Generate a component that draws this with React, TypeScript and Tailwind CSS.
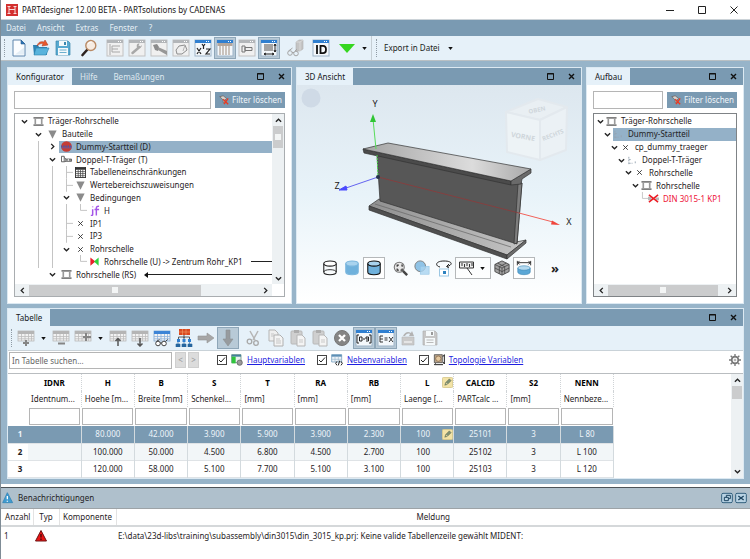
import React, { useState } from "react";
import clsx from "clsx";

/* ---------- Icons ---------- */

interface IconProps {
  children: React.ReactNode;
  size?: string;
}

const Icon: React.FC<IconProps> = ({ children, size = "size-[18px]" }) => (
  <svg viewBox="0 0 18 18" className={clsx("shrink-0", size)} fill="none" aria-hidden="true">
    {children}
  </svg>
);

// little application window used as the base of many toolbar icons
const WindowIcon: React.FC<{ blue?: boolean; children?: React.ReactNode }> = ({ blue, children }) => (
  <Icon>
    <rect x="1" y="1" width="16" height="16" fill={blue ? "#f4f8fb" : "#f0f0f0"} stroke={blue ? "#9db4c8" : "#c2c2c2"} />
    <rect x="1" y="1" width="16" height="3" fill={blue ? "#2f7fd0" : "#b3b6b9"} />
    <path d="M12 2.500h1M14 2.500h1" stroke="#fff" />
    {children}
  </Icon>
);

const GridIcon: React.FC<{ blue?: boolean; children?: React.ReactNode }> = ({ blue, children }) => (
  <Icon>
    <rect x="1" y="2" width="16" height="10" fill="#f2f2f2" stroke={blue ? "#6f9cc8" : "#b0b0b0"} strokeWidth=".7" />
    <rect x="1" y="2" width="16" height="3" fill={blue ? "#3c84d6" : "#b5b5b5"} />
    <path d="M1 7.500h16M1 9.800h16M4.500 5v7M8 5v7M11.500 5v7M14.500 5v7" stroke={blue ? "#8fb4dc" : "#bdbdbd"} strokeWidth=".8" />
    {children}
  </Icon>
);

const NewIcon = () => (
  <Icon>
    <path d="M3 1h8l4 4v12H3z" fill="#fbfdff" stroke="#5f86ad" />
    <path d="M11 1v4h4z" fill="#2c76b8" stroke="#2c5f92" strokeWidth=".6" />
    <path d="M5 15.500h9v-7z" fill="#e4eef6" />
  </Icon>
);

const OpenIcon = () => (
  <Icon>
    <path d="M1 6h5l1 2h8v8H2z" fill="#2d82b4" />
    <path d="M4 9h13l-3 7H2z" fill="#58b3dc" stroke="#2c83ad" strokeWidth=".6" />
    <path d="M5 7c1-4 4-5 7-4l1-2 3 5-6 1 1-2c-2-1-4 0-6 2z" fill="#e8582b" stroke="#a9381b" strokeWidth=".5" />
  </Icon>
);

const SaveIcon = ({ gray = false }) => (
  <Icon>
    <path d="M2 2h12l2 2v12H2z" fill={gray ? "#c6c6c6" : "#58a9d0"} stroke={gray ? "#b0b0b0" : "#3b87ae"} strokeWidth=".7" />
    <rect x="5" y="2" width="8" height="5" fill="#f4f9fb" />
    <rect x="10" y="3" width="2" height="3" fill={gray ? "#999" : "#3b87ae"} />
    <rect x="4" y="9" width="10" height="7" fill="#f4f9fb" />
    <path d="M5.500 11h7M5.500 13.500h7" stroke={gray ? "#bbb" : "#6cafce"} />
  </Icon>
);

const SearchIcon = () => (
  <Icon>
    <path d="M7 11l-4.500 5" stroke="#2d2320" strokeWidth="2.600" strokeLinecap="round" />
    <circle cx="10.800" cy="6.500" r="5" fill="#f7ece2" stroke="#b98b66" strokeWidth="1.400" />
    <path d="M8 5c1-2 3-2 4-2" stroke="#fff" />
  </Icon>
);

const GlassesIcon = () => (
  <Icon>
    <path d="M10 3l3-2h4v9l-3 2h-4z" fill="#c4c4c4" stroke="#b0b0b0" strokeWidth=".6" />
    <path d="M10 3h4v9M14 3l3-2" stroke="#e2e2e2" strokeWidth=".7" />
    <circle cx="4" cy="14" r="2.300" stroke="#a5a5a5" />
    <circle cx="10" cy="14.500" r="2.300" stroke="#a5a5a5" />
    <path d="M6 13.500h2M2.500 12l4-3M9 12l2-2" stroke="#a5a5a5" />
  </Icon>
);

const ScissorsIcon = () => (
  <Icon>
    <path d="M5 2l5 9M13 2L8 11" stroke="#b5b5b5" strokeWidth="1.500" />
    <circle cx="4.500" cy="12.500" r="2.300" stroke="#a8a8a8" strokeWidth="1.300" />
    <circle cx="11" cy="14" r="2.300" stroke="#a8a8a8" strokeWidth="1.300" />
  </Icon>
);

const CopyIcon = () => (
  <Icon>
    <path d="M2 1h6l3 3v8H2z" fill="#efefef" stroke="#b5b5b5" />
    <path d="M7 6h6l3 3v8H7z" fill="#f4f4f4" stroke="#b0b0b0" />
    <path d="M9 10h4M9 12h5M9 14h5M4 5h3M4 7h3" stroke="#c5c5c5" />
  </Icon>
);

const PasteIcon = () => (
  <Icon>
    <rect x="2" y="2" width="11" height="13" rx="1" fill="#cfcfcf" stroke="#b8b8b8" />
    <rect x="5" y="1" width="5" height="3" fill="#adadad" />
    <path d="M8 6h5l3 3v8H8z" fill="#f4f4f4" stroke="#b5b5b5" />
    <path d="M10 11h4M10 13h4" stroke="#c9c9c9" />
  </Icon>
);

const CancelIcon = () => (
  <Icon>
    <circle cx="9" cy="9" r="7.500" fill="#858585" stroke="#777" />
    <path d="M6 6l6 6M12 6l-6 6" stroke="#fff" strokeWidth="2.300" />
  </Icon>
);

const RestoreIcon = () => (
  <Icon>
    <path d="M3 8h12v8H3z" fill="#cacaca" stroke="#b5b5b5" strokeWidth=".6" />
    <path d="M4 7c2-4 5-5 8-3l1-2 2 5-5 0 1-2c-2-1-4 0-5 2z" fill="#b3b3b3" />
    <path d="M5 13h8" stroke="#eee" strokeWidth="1.500" />
  </Icon>
);

const OrgIcon = () => (
  <Icon>
    <rect x="4" y="0" width="11" height="6" fill="#d9481e" />
    <path d="M4 3h11M7.500 0v6M11 0v6" stroke="#f1a06a" strokeWidth=".6" />
    <path d="M9 6v3M3.500 10V8h11v2M9 8v2" stroke="#3a3a3a" strokeWidth=".8" />
    <path d="M2 10h3v3H2zM7.500 10h3v3h-3zM13 10h3v3h-3z" fill="#2f7fd0" />
    <path d="M1 15h4v3H1zM7 15h4v3H7zM13 15h4v3h-4zM3 13v2M9 13v2M14.500 13v2" fill="#26669e" stroke="#26669e" strokeWidth=".6" />
  </Icon>
);

const FilterClearIcon = () => (
  <svg viewBox="0 0 12 12" className="size-[10px] shrink-0" fill="none" aria-hidden="true">
    <path d="M1 2l4-1 4 3-2 2v4l-2-1V6z" fill="#d9d2cc" stroke="#5c4a44" strokeWidth=".7" />
    <path d="M5 5l6 6M11 4l-5 7" stroke="#ea3a22" strokeWidth="1.600" />
  </svg>
);

const AppLogo = () => (
  <svg viewBox="0 0 12 12" className="size-3" fill="none" aria-hidden="true">
    <rect width="12" height="12" fill="#d3302f" />
    <path d="M3 3v6M9 3v6M1.500 2.500h3M7.500 2.500h3M1.500 9.500h3M7.500 9.500h3M3 5.500h6" stroke="#f8dcdc" />
  </svg>
);

const PencilIcon = () => (
  <svg viewBox="0 0 12 12" className="size-[11px] shrink-0" fill="none" aria-hidden="true">
    <rect x=".5" y=".5" width="11" height="11" rx="1" fill="#f3e3a6" stroke="#d8c98e" />
    <path d="M3 9l1-3 4-4 2 2-4 4z" fill="#7f9072" stroke="#5f6b52" strokeWidth=".5" />
    <path d="M4.500 6.500l1.500 1.500" stroke="#f3e3a6" />
  </svg>
);

const Caret = () => (
  <svg viewBox="0 0 6 4" className="h-[3px] w-[5px] shrink-0" aria-hidden="true">
    <path d="M0 0h6L3 4z" fill="#111" />
  </svg>
);

type Direction = "up" | "down" | "left" | "right";

const chevronPaths: Record<Direction, string> = {
  up: "M1 5.500l3-3 3 3",
  down: "M1 2.500l3 3 3-3",
  left: "M5.500 1l-3 3 3 3",
  right: "M2.500 1l3 3-3 3"
};

const Chevron: React.FC<{ dir: Direction }> = ({ dir }) => (
  <svg viewBox="0 0 8 8" className="size-[7px] shrink-0" fill="none" aria-hidden="true">
    <path d={chevronPaths[dir]} stroke="#222" strokeWidth="1.500" />
  </svg>
);

/* ---------- Tree ---------- */

type TreeIconName = "module" | "filter" | "dummy" | "beam" | "table" | "if" | "point" | "link" | "faint" | "error";

const TreeIcon: React.FC<{ name: TreeIconName }> = ({ name }) => (
  <svg viewBox="0 0 12 12" className="size-[11px] shrink-0" fill="none" aria-hidden="true">
    {name === "module" && (
      <>
        <path d="M.5 2h11M.5 10h11" stroke="#808080" strokeWidth="1.800" />
        <path d="M2.500 3v6M9.500 3v6" stroke="#9a9a9a" strokeWidth="1.800" />
      </>
    )}
    {name === "filter" && <path d="M1.500 1.500h9L6 10.500z" fill="#8b8b8b" />}
    {name === "dummy" && (
      <>
        <circle cx="6" cy="6" r="5.800" fill="#c63c34" />
        <path d="M.5 5v2M3 5v2M5.500 5v2M8 5v2M10.500 5v2" stroke="#4a55a8" strokeWidth="1.600" />
        <path d="M0 7.500h12" stroke="#5b5fae" strokeWidth=".8" />
      </>
    )}
    {name === "beam" && (
      <>
        <path d="M.5 2.500h3v6h-3z" fill="#fff" stroke="#555" />
        <path d="M3.500 4l2 1.500h6v2.500h-6l-2 .5" fill="#999" stroke="#444" strokeWidth=".8" />
        <path d="M8 5.500v2" stroke="#fff" />
      </>
    )}
    {name === "faint" && <path d="M2 2v8M2 9h4M2 5h2M9 7v2h1" stroke="#95a3b0" strokeWidth="1" strokeDasharray="2 1" />}
    {name === "table" && (
      <>
        <rect x=".5" y=".5" width="11" height="11" fill="#fff" stroke="#333" />
        <path d="M0 2h12" stroke="#333" strokeWidth="2" />
        <path d="M1 5h10M1 7.200h10M1 9.500h10M3.500 3v8M6 3v8M8.500 3v8" stroke="#444" strokeWidth=".8" />
      </>
    )}
    {name === "if" && (
      <path d="M4 4.500v6q0 1-2 1M4 1.500v1M11 1.500q-3-.5-3 2v8M6 5h5" stroke="#a455e8" strokeWidth="1.600" />
    )}
    {name === "point" && <path d="M3.500 3.500l5 5M8.500 3.500l-5 5" stroke="#333" strokeWidth="1" />}
    {name === "link" && (
      <>
        <path d="M1.500 1.500L7 6l-5.500 4.500z" fill="#e8202a" />
        <path d="M10.500 1.500L5.500 6l5 4.500z" fill="#2fd33c" />
      </>
    )}
    {name === "error" && (
      <>
        <path d="M0 4h4v4H0M8 5h4v3H8" fill="#b9b9b9" />
        <path d="M1 2l10 8M11 2L1 10" stroke="#ec1c24" strokeWidth="1.700" />
      </>
    )}
  </svg>
);

type Branch = "open" | "closed" | "tee" | "elbow";

interface TreeNode {
  label: string;
  icon: TreeIconName;
  // one character per ancestor level: "|" draws a guide line
  guides: string;
  branch: Branch;
  selected?: boolean;
  error?: boolean;
  arrow?: "out" | "in";
}

const configNodes: TreeNode[] = [
  { label: "Träger-Rohrschelle", icon: "module", guides: "", branch: "open" },
  { label: "Bauteile", icon: "filter", guides: " ", branch: "open" },
  { label: "Dummy-Startteil (D)", icon: "dummy", guides: " |", branch: "closed", selected: true },
  { label: "Doppel-T-Träger (T)", icon: "beam", guides: " |", branch: "open" },
  { label: "Tabelleneinschränkungen", icon: "table", guides: " ||", branch: "tee" },
  { label: "Wertebereichszuweisungen", icon: "filter", guides: " ||", branch: "tee" },
  { label: "Bedingungen", icon: "filter", guides: " ||", branch: "open" },
  { label: "H", icon: "if", guides: " |||", branch: "elbow" },
  { label: "IP1", icon: "point", guides: " ||", branch: "tee" },
  { label: "IP3", icon: "point", guides: " ||", branch: "tee" },
  { label: "Rohrschelle", icon: "point", guides: " ||", branch: "open" },
  { label: "Rohrschelle (U) -> Zentrum Rohr_KP1", icon: "link", guides: " || ", branch: "elbow", arrow: "out" },
  { label: "Rohrschelle (RS)", icon: "module", guides: "  ", branch: "open", arrow: "in" }
];

const structureNodes: TreeNode[] = [
  { label: "Träger-Rohrschelle", icon: "module", guides: "", branch: "open" },
  { label: "Dummy-Startteil", icon: "faint", guides: " ", branch: "open", selected: true },
  { label: "cp_dummy_traeger", icon: "point", guides: "  ", branch: "open" },
  { label: "Doppel-T-Träger", icon: "faint", guides: "   ", branch: "open" },
  { label: "Rohrschelle", icon: "point", guides: "    ", branch: "open" },
  { label: "Rohrschelle", icon: "module", guides: "     ", branch: "open" },
  { label: "DIN 3015-1 KP1", icon: "error", guides: "      ", branch: "elbow", error: true }
];

const BranchCell: React.FC<{ branch: Branch; compact?: boolean }> = ({ branch, compact }) => (
  <span className={clsx("flex shrink-0 items-center justify-center self-stretch", compact ? "w-3" : "w-3.5")}>
    {branch === "open" && <Chevron dir="down" />}
    {branch === "closed" && <Chevron dir="right" />}
    {branch === "tee" && (
      <svg viewBox="0 0 14 13" className="h-full w-full" preserveAspectRatio="none" aria-hidden="true">
        <path d="M7.500 0v13M7 6.500h7" stroke="#c4c4c4" fill="none" />
      </svg>
    )}
    {branch === "elbow" && (
      <svg viewBox="0 0 14 13" className="h-full w-full" preserveAspectRatio="none" aria-hidden="true">
        <path d="M7.500 0v6.500h6.500" stroke="#c4c4c4" fill="none" />
      </svg>
    )}
  </span>
);

const Tree: React.FC<{ nodes: TreeNode[]; label: string; compact?: boolean }> = ({ nodes, label, compact }) => (
  <ul
    role="tree"
    aria-label={label}
    className={clsx("flex min-w-0 flex-col", compact ? "h-[90px]" : "h-[166px] pl-0.5")}
  >
    {nodes.map((node, i) => (
      <li key={i} role="treeitem" aria-selected={!!node.selected} className="flex min-h-0 flex-1 items-center">
        {node.guides.split("").map((g, level) => (
          <span key={level} className={clsx("flex shrink-0 justify-center self-stretch", compact ? "w-[7px]" : "w-3.5")}>
            {g === "|" && <span className="w-px bg-[#c4c4c4]" />}
          </span>
        ))}
        <BranchCell branch={node.branch} compact={compact} />
        <span
          className={clsx(
            "flex min-w-0 flex-1 items-center gap-1 self-stretch whitespace-nowrap",
            !compact && "pl-0.5",
            node.selected && "bg-[#94b1c8]",
            node.error && "text-[#ee1438]"
          )}
        >
          <TreeIcon name={node.icon} />
          {node.label}
          {node.arrow && (
            <span className="ml-1 flex min-w-0 flex-1 items-center">
              {node.arrow === "in" && (
                <svg viewBox="0 0 4 6" className="h-1.5 w-1 shrink-0" aria-hidden="true">
                  <path d="M4 0v6L0 3z" fill="#111" />
                </svg>
              )}
              <span className="h-px flex-1 bg-[#222]" />
            </span>
          )}
        </span>
      </li>
    ))}
  </ul>
);

/* ---------- Scrollbars ---------- */

const HScroll: React.FC<{ thumb: string; right: string }> = ({ thumb, right }) => (
  <div className="flex h-3 items-center bg-[#edf1f3]">
    <span className="flex w-3.5 justify-center"><Chevron dir="left" /></span>
    <span className={clsx("flex h-[11px] items-center justify-center bg-[#cbcccd]", thumb)}>
      <span className="size-1.5 bg-[#f3f5f5]" />
    </span>
    <span className={right} />
    <span className="flex w-3.5 justify-center"><Chevron dir="right" /></span>
  </div>
);

const VScroll: React.FC<{ thumb: string; grip?: boolean }> = ({ thumb, grip }) => (
  <div className="flex w-3 shrink-0 flex-col items-center bg-[#edf1f3]">
    <span className="flex h-3 items-center"><Chevron dir="up" /></span>
    <span className={clsx("flex w-[10px] items-center justify-center bg-[#cbcccd]", thumb)}>
      {grip && <span className="size-1.5 bg-[#f3f5f5]" />}
    </span>
    <span className="flex-1" />
    <span className="flex h-3 items-center"><Chevron dir="down" /></span>
  </div>
);

/* ---------- Panels ---------- */

interface PanelProps {
  tabs: string[];
  children: React.ReactNode;
}

const Panel: React.FC<PanelProps> = ({ tabs, children }) => {
  const [active, setActive] = useState(tabs[0]);

  return (
    <section className="flex min-w-0 flex-col border border-[#dce9f2] bg-white">
      <header className="flex h-[17px] items-stretch bg-[#7a9ab2]">
        <div role="tablist" className="flex">
          {tabs.map(tab => (
            <button
              key={tab}
              role="tab"
              aria-selected={active === tab}
              onClick={() => setActive(tab)}
              className={clsx("px-2", active === tab ? "bg-[#e6f1f9] text-[#15181b]" : "text-[#dfe9f0]")}
            >
              {tab}
            </button>
          ))}
        </div>
        <div className="ml-auto flex items-center gap-3.5 pr-1.5">
          <button aria-label="Maximieren">
            <svg viewBox="0 0 7 7" className="size-[7px]" fill="none">
              <path d="M.5 .5h6v6h-6zM0 1h7" stroke="#111" />
            </svg>
          </button>
          <button aria-label="Schließen">
            <svg viewBox="0 0 7 7" className="size-[7px]" fill="none">
              <path d="M1 1l5 5M6 1L1 6" stroke="#111" strokeWidth="1.400" />
            </svg>
          </button>
        </div>
      </header>
      {children}
    </section>
  );
};

const FilterBar: React.FC<{ label: string }> = ({ label }) => (
  <div className="flex items-center gap-1">
    <input aria-label={label} className="h-[18px] min-w-0 flex-1 border border-[#b5b5b5] bg-white px-1 outline-none" />
    <button className="flex h-4 w-[70px] items-center gap-[3px] bg-[#7a9ab2] pl-1 whitespace-nowrap text-[#f1f6fa]">
      <FilterClearIcon />
      Filter löschen
    </button>
  </div>
);

/* ---------- Toolbars ---------- */

interface ToolProps {
  label: string;
  pressed?: boolean;
  children: React.ReactNode;
}

const Tool: React.FC<ToolProps> = ({ label, pressed, children }) => (
  <button
    aria-label={label}
    className={clsx(
      "flex h-[22px] w-[22px] shrink-0 items-center justify-center",
      pressed && "border border-[#8ea6b8] bg-[#b8cad7]"
    )}
  >
    {children}
  </button>
);

const Handle = () => <span className="mr-[3px] h-[18px] w-px shrink-0 border-l border-dotted border-[#8f9ba5]" />;

const MainToolbar = () => (
  <div className="flex h-[25px] items-center border-b border-[#b9c0c4] bg-[#e6f1f9] pl-[3px]">
    <Handle />
    <Tool label="Neu"><NewIcon /></Tool>
    <Tool label="Öffnen"><OpenIcon /></Tool>
    <Tool label="Speichern"><SaveIcon /></Tool>
    <span className="w-1" />
    <Tool label="Suchen"><SearchIcon /></Tool>
    <span className="w-1" />
    <Tool label="Konfigurator">
      <WindowIcon>
        <path d="M4 5v11M6 7h8M6 10h6M6 13h8M6 7v6" stroke="#a8a8a8" />
      </WindowIcon>
    </Tool>
    <Tool label="Werkzeuge">
      <WindowIcon>
        <path d="M4.500 14l7-6" stroke="#a8a8a8" strokeWidth="2.500" strokeLinecap="round" />
        <path d="M14 6l-2 2-1.500-1 1-2.500c-3 0-3 2-2.500 4 2 1.500 5 0 5-2.500z" fill="#a8a8a8" />
      </WindowIcon>
    </Tool>
    <Tool label="Schraube">
      <WindowIcon>
        <path d="M3 6l4-1 2 3-1 4-3-1z" fill="#8b8b8b" />
        <path d="M8 8l9 4v4l-9-5z" fill="#979797" />
      </WindowIcon>
    </Tool>
    <Tool label="Geometrie">
      <WindowIcon>
        <path d="M4 11l3-4 6-1 2 5-5 4-5 0z" fill="#eee" stroke="#8d8d8d" />
        <path d="M13 6l-2 6" stroke="#b5b5b5" />
      </WindowIcon>
    </Tool>
    <Tool label="XYZ">
      <WindowIcon blue>
        <path d="M3 9l4 6M7 9l-4 6M8 5l1.500 2L11 5M9.500 7v3M12 10h4l-4 5h4" stroke="#222" strokeWidth="1.200" />
      </WindowIcon>
    </Tool>
    <Tool label="Tabelle" pressed>
      <WindowIcon blue>
        <path d="M1.500 4h15v3h-15z" fill="#b5a79c" />
        <path d="M4 5v11M7 5v11M10 5v11M13 5v11" stroke="#b3a69b" strokeWidth="1.300" />
      </WindowIcon>
    </Tool>
    <Tool label="Bauteil">
      <WindowIcon>
        <path d="M4 7h3v6H4zM7 8.500h7v3H7z" stroke="#777" />
      </WindowIcon>
    </Tool>
    <Tool label="Maße" pressed>
      <WindowIcon blue>
        <rect x="4" y="5" width="9" height="7" fill="#a3a3a3" />
        <path d="M15 5v8M4 15h10M14 7l1-2 1 2M14 11l1 2 1-2M6 14l-2 1 2 1M12 14l2 1-2 1" stroke="#222" />
      </WindowIcon>
    </Tool>
    <span className="w-1" />
    <Tool label="Vorschau"><GlassesIcon /></Tool>
    <span className="w-1" />
    <Tool label="ID">
      <WindowIcon blue>
        <path d="M5 6v9M8.500 6.800h2.500q3 0 3 3.700t-3 3.700H8.500z" stroke="#111" strokeWidth="1.800" />
      </WindowIcon>
    </Tool>
    <span className="w-1" />
    <Tool label="Ausführen">
      <Icon>
        <path d="M1 5h16l-8 9z" fill="#35d61f" />
      </Icon>
    </Tool>
    <button aria-label="Weitere Aktionen" className="flex w-[13px] justify-center"><Caret /></button>
    <span className="mr-1 h-6 w-px bg-[#c5ced4]" />
    <Handle />
    <button className="ml-1 flex items-center gap-2 whitespace-nowrap text-[#1b1e21]">
      Export in Datei
      <Caret />
    </button>
  </div>
);

const TableToolbar = () => (
  <div className="flex h-[25px] items-center border-b border-[#c9d2d8] bg-[#e6f1f9] pl-[3px]">
    <Handle />
    <Tool label="Zeile einfügen"><GridIcon><path d="M9 11v6M6 14h6" stroke="#858585" strokeWidth="2" /></GridIcon></Tool>
    <button aria-label="Einfügeoptionen" className="flex w-[13px] justify-center"><Caret /></button>
    <Tool label="Zeile löschen"><GridIcon><path d="M6 14.500h7" stroke="#858585" strokeWidth="2" /></GridIcon></Tool>
    <Tool label="Spalte einfügen"><GridIcon><path d="M12 4v8M9 8h8" stroke="#858585" strokeWidth="2" /></GridIcon></Tool>
    <button aria-label="Spaltenoptionen" className="flex w-[13px] justify-center"><Caret /></button>
    <Tool label="Nach oben"><GridIcon><path d="M9 17v-7M6.500 12L9 9.500l2.500 2.500" stroke="#555" strokeWidth="1.500" /></GridIcon></Tool>
    <Tool label="Nach unten"><GridIcon><path d="M9 9v7M6.500 14.500L9 17l2.500-2.500" stroke="#555" strokeWidth="1.500" /></GridIcon></Tool>
    <Tool label="Tabelle prüfen">
      <GridIcon blue>
        <circle cx="5" cy="14.500" r="2.300" fill="#fff" stroke="#444" />
        <circle cx="11" cy="14.500" r="2.300" fill="#fff" stroke="#444" />
        <path d="M7 14h2M3.500 12.500l3-2M12.500 12.500l2-2" stroke="#444" />
      </GridIcon>
    </Tool>
    <Tool label="Struktur"><OrgIcon /></Tool>
    <Tool label="Weiter">
      <Icon><path d="M1 7h9V4l7 5-7 5v-3H1z" fill="#a6a6a6" stroke="#969696" strokeWidth=".6" /></Icon>
    </Tool>
    <Tool label="Übernehmen" pressed>
      <Icon><path d="M7 1h4v9h3l-5 7-5-7h3z" fill="#979b9e" stroke="#8c9093" strokeWidth=".6" /></Icon>
    </Tool>
    <span className="w-1" />
    <Tool label="Ausschneiden"><ScissorsIcon /></Tool>
    <Tool label="Kopieren"><CopyIcon /></Tool>
    <Tool label="Einfügen"><PasteIcon /></Tool>
    <Tool label="Inhalte einfügen"><PasteIcon /></Tool>
    <Tool label="Abbrechen"><CancelIcon /></Tool>
    <Tool label="Wertebereich" pressed>
      <WindowIcon blue>
        <path d="M4 6H2v8h2M14 6h2v8h-2M4.500 8h2.500v4H4.500zM8 10h2M11 12h2.500V8H11v2h2" stroke="#222" />
      </WindowIcon>
    </Tool>
    <Tool label="Ausdruck" pressed>
      <WindowIcon blue>
        <path d="M6 7H3v6h3M3 10h3M7.500 9h3M7.500 11h3M12 8l4 5M16 8l-4 5" stroke="#333" />
      </WindowIcon>
    </Tool>
    <Tool label="Wiederherstellen"><RestoreIcon /></Tool>
    <Tool label="Tabelle speichern"><SaveIcon gray /></Tool>
  </div>
);

/* ---------- 3D view ---------- */

const Scene = () => (
  <svg viewBox="0 0 284 218" className="h-[218px] w-full" fill="none" role="img" aria-label="Doppel-T-Träger">
    <defs>
      <linearGradient id="topFace" x1="0" y1="0" x2="1" y2="0">
        <stop offset="0" stopColor="#a4a4a4" />
        <stop offset=".65" stopColor="#dcdcdc" />
        <stop offset="1" stopColor="#a8a8a8" />
      </linearGradient>
      <linearGradient id="bottomFace" x1="0" y1="0" x2="1" y2="0">
        <stop offset="0" stopColor="#8f8f8f" />
        <stop offset="1" stopColor="#c5c5c5" />
      </linearGradient>
    </defs>

    <circle cx="14" cy="13" r="9.500" fill="#cfdae6" />

    {/* Ansichtswürfel */}
    <g stroke="#e3e9ee" strokeWidth="2" strokeLinejoin="round">
      <path d="M209 27l32-13 29 8-27 13z" fill="#e9eff3" />
      <path d="M209 27l34 8v40l-33-8z" fill="#edf3f6" />
      <path d="M243 35l27-13-1 43-26 10z" fill="#ebf1f5" />
    </g>
    <g fill="#cfd6db" fontSize="7" fontWeight="bold" textAnchor="middle">
      <text x="226" y="54" transform="rotate(10 226 52)">VORNE</text>
      <text x="256" y="52" fontSize="6" transform="rotate(-22 256 50)">RECHTS</text>
      <text x="240" y="27" fontSize="6" transform="rotate(-12 240 25)">OBEN</text>
    </g>

    {/* Träger */}
    <g stroke="#333" strokeWidth=".7" strokeLinejoin="round">
      <path d="M72 121l10-7 137 43 10-2-19 15z" fill="url(#bottomFace)" />
      <path d="M72 121l138 49v4L72 125z" fill="#505050" />
      <path d="M210 170l19-15v3l-19 16z" fill="#6d6d6d" />
      <path d="M80 70l145 28-5 61-137-43z" fill="#575757" />
      <path d="M221 99l4-1-5 60-3 1z" fill="#7e7e7e" />
      <path d="M78 119l136 43" stroke="#666" />
      <path d="M66 64l148 32v4L67 68z" fill="#4b4b4b" />
      <path d="M214 96l20-12v4l-9 6-1 5-10 1z" fill="#6a6a6a" />
      <path d="M66 64l25-6 143 26-20 12z" fill="url(#topFace)" />
    </g>

    <path d="M79 64l-3-30" stroke="#58dc5a" />
    <path d="M76 29l-3 8h6z" fill="#2fc534" />
    <path d="M80 70l1 22" stroke="#4fd84f" strokeDasharray="2 1" />
    <path d="M81 92l-32 11" stroke="#6464f0" />
    <path d="M42 105l7-4 1 4z" fill="#4b4bff" stroke="#4b4bff" />
    <path d="M81 92l141 36" stroke="#8f3a3a" strokeWidth=".8" />
    <path d="M222 128l34 9" stroke="#f2625a" />
    <path d="M263 140l-8-4.500-1 4z" fill="#f0463c" />
    <circle cx="81" cy="92" r="2" fill="#26324a" />

    <g fill="#222" fontSize="9" textAnchor="middle">
      <text x="78" y="22">Y</text>
      <text x="40" y="104">Z</text>
      <text x="272" y="140">X</text>
    </g>
  </svg>
);

const Cylinder: React.FC<{ fill: string; stroke: string }> = ({ fill, stroke }) => (
  <Icon size="size-4">
    <path d="M2 4v9.500c0 4 14 4 14 0V4" fill={fill} stroke={stroke} strokeWidth="1.200" />
    <ellipse cx="9" cy="4" rx="7" ry="2.900" fill={fill === "none" ? "#fff" : "#a9d3ee"} stroke={stroke} strokeWidth="1.200" />
    {fill === "none" && <path d="M2 13.500c0-3.500 14-3.500 14 0" stroke={stroke} />}
  </Icon>
);

const ViewTool: React.FC<ToolProps> = ({ label, pressed, children }) => (
  <button
    aria-label={label}
    className={clsx("flex size-[22px] shrink-0 items-center justify-center", pressed && "border border-[#b5b8ba] bg-white")}
  >
    {children}
  </button>
);

const ViewToolbar = () => (
  <div className="absolute bottom-6 left-[22px] flex items-center">
    <ViewTool label="Drahtmodell"><Cylinder fill="none" stroke="#222" /></ViewTool>
    <ViewTool label="Schattiert"><Cylinder fill="#6fb1dc" stroke="#7ab6dd" /></ViewTool>
    <ViewTool label="Schattiert mit Kanten" pressed><Cylinder fill="#6fb1dc" stroke="#111" /></ViewTool>
    <span className="w-1" />
    <ViewTool label="Zoom">
      <Icon size="size-[15px]">
        <path d="M11 11l6 6" stroke="#444" strokeWidth="3" />
        <circle cx="7.500" cy="7.500" r="6" fill="#e8e8e8" stroke="#777" strokeWidth="1.300" />
        <path d="M5 7V5h2M10 5h1v2M11 9v2h-2M7 11H5V9" stroke="#333" strokeWidth="1.400" />
      </Icon>
    </ViewTool>
    <ViewTool label="Transparenz">
      <Icon size="size-4">
        <circle cx="7" cy="7" r="6" fill="#8fc3e6" stroke="#777" />
        <rect x="7" y="7" width="10" height="9" fill="#a8d3f0" fillOpacity=".8" stroke="#8bbfe2" strokeWidth=".6" />
      </Icon>
    </ViewTool>
    <ViewTool label="Drehen">
      <Icon>
        <path d="M5 8C0 7 0 2 9 2s9 4 3 5.500M14 5l-2.500 2.500L14 9" stroke="#222" />
        <rect x="4.500" y="10" width="9" height="7" fill="#fff" stroke="#9cc7e3" />
        <rect x="8" y="12" width="3" height="3" fill="#2d82c0" />
      </Icon>
    </ViewTool>
    <button aria-label="Messen" className="flex h-[22px] w-9 items-center gap-1 border border-[#b5b8ba] bg-white/60 px-0.5">
      <Icon>
        <path d="M1.500 3h14v6h-14z" fill="#eee" stroke="#333" />
        <path d="M4 4v3M6.500 5v3M9 4v3M11.500 5v3M14 4v3M9 9l5 7" stroke="#333" />
      </Icon>
      <Caret />
    </button>
    <ViewTool label="Netz">
      <Icon size="size-4">
        <path d="M9 1l8 4v8l-8 4-8-4V5z" fill="#a2a2a2" stroke="#444" />
        <path d="M9 9v8M1 5l8 4 8-4M4 3.500l8 4v8M14 3.500l-8 4v8M1 9l8 4 8-4" stroke="#3d3d3d" strokeWidth=".8" />
      </Icon>
    </ViewTool>
    <ViewTool label="Bemaßung" pressed>
      <Icon size="size-4">
        <path d="M2 3h14M4 1L2 3l2 2M14 1l2 2-2 2M1.500 1v5M16.500 1v5" stroke="#222" />
        <path d="M2 9v4.500c0 4 14 4 14 0V9" fill="#5ba7d6" stroke="#3e88b5" strokeWidth=".7" />
        <ellipse cx="9" cy="9" rx="7" ry="2.500" fill="#b5daf0" stroke="#3e88b5" strokeWidth=".7" />
      </Icon>
    </ViewTool>
    <button aria-label="Mehr" className="ml-4 text-[13px] leading-4 font-bold text-[#222]">»</button>
  </div>
);

/* ---------- Variable table ---------- */

interface Column {
  name: string;
  desc: string;
  editable?: boolean;
}

const columns: Column[] = [
  { name: "IDNR", desc: "Identnum..." },
  { name: "H", desc: "Hoehe [m..." },
  { name: "B", desc: "Breite [mm]" },
  { name: "S", desc: "Schenkel..." },
  { name: "T", desc: "[mm]" },
  { name: "RA", desc: "[mm]" },
  { name: "RB", desc: "[mm]" },
  { name: "L", desc: "Laenge [...", editable: true },
  { name: "CALCID", desc: "PARTcalc ..." },
  { name: "S2", desc: "[mm]" },
  { name: "NENN", desc: "Nennbeze..." }
];

const rows: string[][] = [
  ["", "80.000", "42.000", "3.900", "5.900", "3.900", "2.300", "100", "25101", "3", "L 80"],
  ["", "100.000", "50.000", "4.500", "6.800", "4.500", "2.700", "100", "25102", "3", "L 100"],
  ["", "120.000", "58.000", "5.100", "7.700", "5.100", "3.100", "100", "25103", "3", "L 120"]
];

const VariableTable = () => {
  const [selected, setSelected] = useState(0);

  return (
    <table className="w-[606px] shrink-0 table-fixed border-collapse">
      <colgroup>
        <col className="w-5" />
        {columns.map(c => <col key={c.name} />)}
      </colgroup>
      <thead>
        <tr className="h-[17px]">
          <td />
          {columns.map(c => (
            <th key={c.name} scope="col" className="border-r border-dotted border-[#cfd3d6] p-0 font-bold text-black">
              <span className="grid grid-cols-[11px_1fr_11px] items-center">
                <span />
                {c.name}
                {c.editable && <PencilIcon />}
              </span>
            </th>
          ))}
        </tr>
        <tr className="h-4">
          <td />
          {columns.map(c => (
            <td key={c.name} className="border-r border-dotted border-[#cfd3d6] p-0 pl-[3px] whitespace-nowrap">
              {c.desc}
            </td>
          ))}
        </tr>
        <tr className="h-[19px]">
          <td />
          {columns.map(c => (
            <td key={c.name} className="p-0 px-px">
              <input
                aria-label={`Filter ${c.name}`}
                className="block h-[17px] w-full border border-[#b5b5b5] bg-white px-1 outline-none"
              />
            </td>
          ))}
        </tr>
      </thead>
      <tbody>
        {rows.map((row, r) => (
          <tr
            key={r}
            onClick={() => setSelected(r)}
            className={clsx(
              "h-[17px] border-b border-[#dfe3e6] text-center",
              r === selected && "bg-[#7a9ab2] text-[#edf4f9]",
              r !== selected && r === 1 && "bg-[#f2f6f8]"
            )}
          >
            <th scope="row" className={clsx("p-0 pl-1 font-bold", r !== selected && "bg-white")}>{r + 1}</th>
            {row.map((value, c) => (
              <td key={c} className="border-r border-[#d3dade] p-0">
                {columns[c].editable ? (
                  <span className="grid grid-cols-[11px_1fr_11px] items-center">
                    <span />
                    <span className="pr-2">{value}</span>
                    {r === selected && <PencilIcon />}
                  </span>
                ) : (
                  value
                )}
              </td>
            ))}
          </tr>
        ))}
      </tbody>
    </table>
  );
};

const VariableToggle: React.FC<{ label: string; children: React.ReactNode }> = ({ label, children }) => {
  const [checked, setChecked] = useState(true);

  return (
    <div className="flex items-center gap-1 whitespace-nowrap">
      <span className="grid size-[10px]">
        <input
          type="checkbox"
          aria-label={label}
          checked={checked}
          onChange={e => setChecked(e.target.checked)}
          className="col-start-1 row-start-1 size-[10px] appearance-none border border-[#444] bg-white"
        />
        {checked && (
          <svg viewBox="0 0 10 10" className="pointer-events-none col-start-1 row-start-1 size-[10px]" fill="none">
            <path d="M2 5l2 2 4-4.500" stroke="#222" />
          </svg>
        )}
      </span>
      <Icon size="size-3">{children}</Icon>
      <a href="#" className="text-[#1f1fe0] underline">{label}</a>
    </div>
  );
};

/* ---------- App ---------- */

const App: React.FC = () => {
  return (
    <div className="flex min-h-screen flex-col border-l border-[#7f8c96] bg-white font-['Noto_Sans','Open_Sans',sans-serif] text-[8px] leading-3 text-[#1f2224]">

      {/* Titelleiste */}
      <div className="flex h-5 items-center gap-1 border-b border-[#ccd3d8] pl-[5px]">
        <AppLogo />
        <h1 className="whitespace-nowrap text-[#161616]">PARTdesigner 12.00 BETA - PARTsolutions by CADENAS</h1>
        <div className="ml-auto flex items-center gap-6 pr-3">
          <button aria-label="Minimieren">
            <svg viewBox="0 0 8 8" className="size-2"><path d="M0 4.500h8" stroke="#222" /></svg>
          </button>
          <button aria-label="Maximieren">
            <svg viewBox="0 0 8 8" className="size-2" fill="none"><path d="M.5 .5h7v7h-7z" stroke="#222" /></svg>
          </button>
          <button aria-label="Schließen">
            <svg viewBox="0 0 8 8" className="size-2"><path d="M.5 .5l7 7M7.500 .5l-7 7" stroke="#222" /></svg>
          </button>
        </div>
      </div>

      {/* Menü */}
      <nav className="flex h-4 items-center gap-[11px] bg-[#7a9ab2] pl-[5px] text-[#e6eff5]">
        <button>Datei</button>
        <button>Ansicht</button>
        <button>Extras</button>
        <button>Fenster</button>
        <button>?</button>
      </nav>

      <MainToolbar />

      <main className="flex flex-col gap-1 bg-[#97b4c9] px-1.5 pt-1.5 pb-[5px]">

        <div className="grid grid-cols-[285fr_286fr_158fr] gap-1">

          <Panel tabs={["Konfigurator", "Hilfe", "Bemaßungen"]}>
            <div className="flex flex-col gap-1 px-1.5 py-1.5">
              <FilterBar label="Konfigurator filtern" />
              <div className="flex h-[184px] flex-col border border-[#a9adb0]">
                <div className="flex min-h-0 flex-1">
                  <div className="min-w-0 flex-1 overflow-hidden pt-px">
                    <Tree nodes={configNodes} label="Konfigurator" />
                  </div>
                  <VScroll thumb="h-[22px]" grip />
                </div>
                <div className="pr-3">
                  <HScroll thumb="flex-[3]" right="flex-1" />
                </div>
              </div>
            </div>
          </Panel>

          <Panel tabs={["3D Ansicht"]}>
            <div className="relative bg-linear-to-b from-[#dde7ef] via-[#e8f3f9] to-white">
              <Scene />
              <ViewToolbar />
            </div>
          </Panel>

          <Panel tabs={["Aufbau"]}>
            <div className="flex flex-col gap-1 px-1.5 py-1.5">
              <FilterBar label="Aufbau filtern" />
              <div className="flex h-[184px] flex-col border border-[#7f8386]">
                <div className="min-h-0 flex-1 overflow-hidden pt-px">
                  <Tree nodes={structureNodes} label="Aufbau" compact />
                </div>
                <HScroll thumb="flex-1" right="w-1" />
              </div>
            </div>
          </Panel>

        </div>

        <Panel tabs={["Tabelle"]}>
          <TableToolbar />

          <div className="flex h-[22px] items-center pr-0.5 pb-1">
            <input
              aria-label="In Tabelle suchen"
              placeholder="In Tabelle suchen..."
              className="ml-px h-[17px] w-[163px] border border-[#b5b5b5] px-0.5 outline-none placeholder:text-[#666]"
            />
            <button aria-label="Zurück" className="ml-[3px] h-4 w-[11px] border border-[#cfcfcf] bg-[#dcdcdc] text-[#999]">&lt;</button>
            <button aria-label="Vor" className="ml-0.5 h-4 w-[11px] border border-[#cfcfcf] bg-[#dcdcdc] text-[#999]">&gt;</button>
            <div className="ml-[18px] flex gap-3">
              <VariableToggle label="Hauptvariablen">
                <path d="M1 1h14v12H1z" fill="#e9f2ee" stroke="#4c7c6a" />
                <path d="M1 1h14v3H1z" fill="#457f9c" />
                <path d="M1 4h6v10H1z" fill="#2fc53c" />
                <circle cx="13" cy="13" r="4" fill="#9a9a9a" stroke="#555" />
              </VariableToggle>
              <VariableToggle label="Nebenvariablen">
                <path d="M1 1h15v11H1z" fill="#edf3f8" stroke="#5d8fb5" />
                <path d="M1 1h15v3H1z" fill="#5d8fb5" />
                <path d="M1 8h15M6 4v8M11 4v8" stroke="#9cb8cc" />
                <path d="M9 11l-2 3 2 3M15 11l2 3-2 3M13 10l-2 7" stroke="#222" strokeWidth="1.500" />
              </VariableToggle>
              <VariableToggle label="Topologie Variablen">
                <path d="M2 1h12v12H2z" fill="#b8a58d" stroke="#333" />
                <circle cx="8" cy="7" r="4" fill="#e5c9a0" stroke="#7a5a3c" />
                <path d="M17 1v14M15 4l2-3M15 12l2 3M2 16h13M4 14l-2 2" stroke="#222" strokeWidth="1.500" />
              </VariableToggle>
            </div>
            <button aria-label="Einstellungen" className="ml-auto">
              <Icon size="size-3">
                <circle cx="9" cy="9" r="5" stroke="#777" strokeWidth="2.500" />
                <path d="M9 0v5M9 13v5M0 9h5M13 9h5M2.500 2.500l3.500 3.500M12 12l3.500 3.500M15.500 2.500L12 6M6 12l-3.500 3.500" stroke="#777" strokeWidth="2" />
                <path d="M9 7v4M7 9h4" stroke="#777" />
              </Icon>
            </button>
          </div>

          <div className="flex border-t border-[#b9bdc0]">
            <div className="min-w-0 flex-1 overflow-hidden">
              <VariableTable />
            </div>
            <VScroll thumb="h-[13px]" />
          </div>
        </Panel>

      </main>

      {/* Benachrichtigungen */}
      <section className="mt-[3px] flex flex-1 flex-col border-t border-[#4c5358]">
        <header className="flex h-[21px] items-center gap-1 border-b border-[#9da3a7] bg-[#afc0cc] pr-[3px] pl-px">
          <Icon size="size-3">
            <path d="M8 1l8 15H1z" fill="#3f9bd0" stroke="#2a7db0" />
            <path d="M8 6v5M8 13v1.500" stroke="#fff" strokeWidth="2" />
          </Icon>
          <h2>Benachrichtigungen</h2>
          <div className="ml-auto flex gap-0.5">
            <button aria-label="Abdocken">
              <Icon size="size-3">
                <rect x="1" y="2" width="16" height="14" rx="2" fill="#b9d3e4" stroke="#34607e" strokeWidth="1.500" />
                <path d="M5 8h6v5H5zM8 8V5h6v5h-3" stroke="#1d4460" strokeWidth="1.500" />
              </Icon>
            </button>
            <button aria-label="Benachrichtigungen schließen">
              <Icon size="size-3">
                <rect x="1" y="2" width="16" height="14" rx="2" fill="#b9d3e4" stroke="#34607e" strokeWidth="1.500" />
                <path d="M5 6l8 6M13 6l-8 6" stroke="#1d4460" strokeWidth="2" />
              </Icon>
            </button>
          </div>
        </header>
        <table className="w-full table-fixed border-collapse">
          <colgroup>
            <col className="w-8" />
            <col className="w-[26px]" />
            <col className="w-[57px]" />
            <col />
          </colgroup>
          <thead>
            <tr className="h-[17px] border-b-2 border-[#d5d8da] text-center">
              <th scope="col" className="border-r border-[#e3e3e3] p-0 pl-0.5 font-normal">Anzahl</th>
              <th scope="col" className="border-r border-[#e3e3e3] p-0 font-normal">Typ</th>
              <th scope="col" className="border-r border-[#e3e3e3] p-0 font-normal">Komponente</th>
              <th scope="col" className="p-0 font-normal">Meldung</th>
            </tr>
          </thead>
          <tbody>
            <tr className="h-5">
              <td className="p-0 pl-[3px]">1</td>
              <td className="p-0 pl-0.5">
                <svg viewBox="0 0 12 12" className="size-3" role="img" aria-label="Fehler">
                  <path d="M6 .5l5.500 10.500H.5z" fill="#e81414" stroke="#6d1414" />
                  <path d="M6 4v3.500M6 8.500v1.500" stroke="#3a0808" strokeWidth="1.200" />
                </svg>
              </td>
              <td />
              <td className="p-0 pl-0.5 whitespace-nowrap">
                E:\data\23d-libs\training\subassembly\din3015\din_3015_kp.prj: Keine valide Tabellenzeile gewählt MIDENT:
              </td>
            </tr>
          </tbody>
        </table>
      </section>

    </div>
  );
};

export default App;
